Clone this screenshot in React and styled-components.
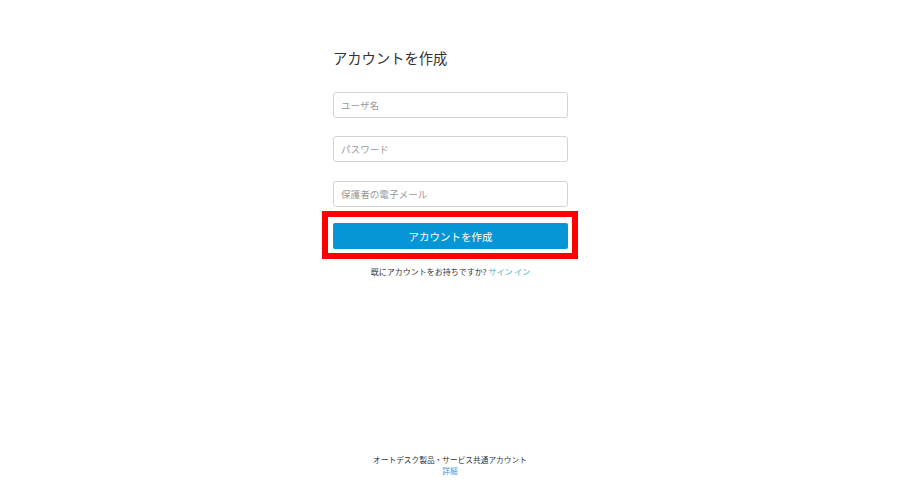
import React from 'react';
import styled, { createGlobalStyle } from 'styled-components';

const GlobalStyle = createGlobalStyle`
  html, body {
    margin: 0;
    padding: 0;
    background: #ffffff;
  }
  body {
    font-family: 'Noto Sans CJK JP', 'Noto Sans', sans-serif;
    color: #333333;
  }
`;

const Page = styled.div`
  height: 100vh;
  display: flex;
  flex-direction: column;
  align-items: center;
  box-sizing: border-box;
`;

const Form = styled.form`
  width: 235px;
  margin-left: 1px;
  padding-top: 49px;
  display: flex;
  flex-direction: column;
`;

const Title = styled.h1`
  margin: 0 0 25px;
  font-size: 14.3px;
  line-height: 18px;
  font-weight: 400;
  color: #333333;
`;

const Field = styled.input`
  box-sizing: border-box;
  width: 100%;
  height: 26px;
  margin: 0 0 ${({ gap }) => gap}px;
  padding: 0 7px;
  border: 1px solid #d4d4d4;
  border-radius: 3px;
  font-family: inherit;
  font-size: 9.6px;
  color: #333;
  outline: none;
  &::placeholder {
    color: #9a9a9a;
  }
`;

const Highlight = styled.div`
  margin: 0 -10px 0 -11px;
  padding: 6px 4px 4px 5px;
  border: 6px solid #ff0000;
`;

const SubmitButton = styled.button`
  display: block;
  width: 100%;
  height: 26px;
  border: 0;
  border-radius: 2px;
  background: #0696d7;
  color: #ffffff;
  font-family: inherit;
  font-size: 10.5px;
  cursor: pointer;
`;

const SignInLine = styled.p`
  margin: 7px 0 0;
  text-align: center;
  font-size: 8px;
  line-height: 12px;
  color: #333333;
  a {
    color: #3db3c2;
    text-decoration: none;
  }
`;

const Footer = styled.footer`
  margin-top: auto;
  padding-bottom: 6px;
  text-align: center;
  font-size: 7.7px;
  line-height: 11px;
  color: #333333;
  a {
    display: block;
    color: #3a9ad9;
    text-decoration: none;
  }
`;

const App = () => {
  return (
    <>
      <GlobalStyle />
      <Page>
        <Form onSubmit={(e) => e.preventDefault()}>
          <Title>アカウントを作成</Title>
          <Field gap={18} type='text' placeholder='ユーザ名' />
          <Field gap={19} type='password' placeholder='パスワード' />
          <Field gap={4} type='email' placeholder='保護者の電子メール' />
          <Highlight>
            <SubmitButton type='submit'>アカウントを作成</SubmitButton>
          </Highlight>
          <SignInLine>
            既にアカウントをお持ちですか? <a href='#'>サイン イン</a>
          </SignInLine>
        </Form>
        <Footer>
          オートデスク製品・サービス共通アカウント
          <a href='#'>詳細</a>
        </Footer>
      </Page>
    </>
  );
};

export default App;
